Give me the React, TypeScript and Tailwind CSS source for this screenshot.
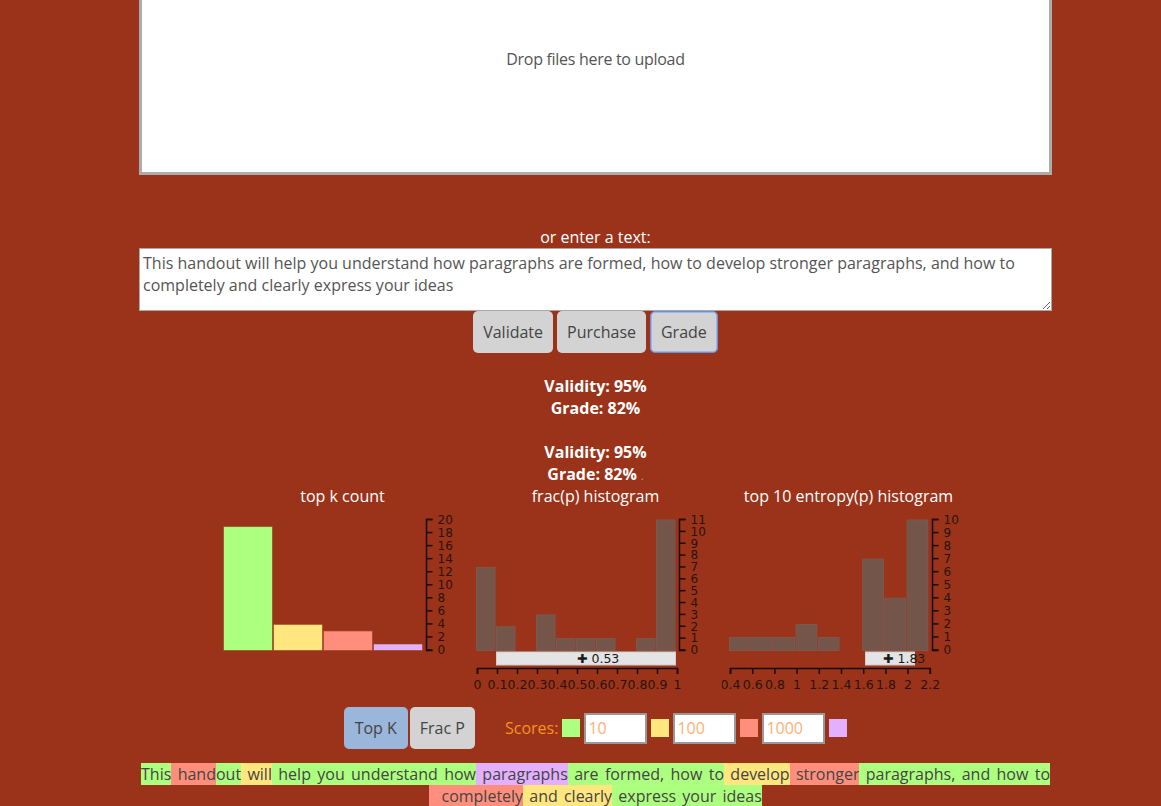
import React from 'react';

const FONT = { fontFamily: '"Open Sans", "Noto Sans", sans-serif' };
const AXIS_FONT = '"DejaVu Sans", sans-serif';

type Bin = { v: number; color?: string };

interface ChartProps {
  title: string;
  bins: Bin[];
  max: number;
  ticks: number[];
  binWidth: number;
  gap: number;
  bottomLabels?: string[];
  bottomStep?: number;
  slider?: { x: number; w: number; tx: number; label: string };
}

const PLOT_BOTTOM = 143;
const PLOT_H = 130.5;
const X0 = 7;
const AXIS_X = 210.5;

const Chart: React.FC<ChartProps> = ({ title, bins, max, ticks, binWidth, gap, bottomLabels, bottomStep, slider }) => {
  const y = (v: number) => PLOT_BOTTOM - (v / max) * PLOT_H;
  return (
    <div className="flex w-[253px] flex-col items-center">
      <div className="h-[22px] leading-[22px] text-white">{title}</div>
      <svg width={253} height={190} className="block">
        {bins.map((b, i) =>
          b.v > 0 ? (
            <rect
              key={i}
              x={X0 + i * binWidth + 0.5}
              y={y(b.v) + 0.5}
              width={binWidth - gap}
              height={PLOT_BOTTOM - y(b.v)}
              fill={b.color ?? '#73554a'}
              stroke={b.color ? 'rgba(150,60,30,0.6)' : '#7a5a4f'}
              strokeWidth={1}
            />
          ) : null
        )}
        {/* right axis */}
        <path
          d={`M${AXIS_X + 6},${y(max)}H${AXIS_X}V${PLOT_BOTTOM + 0.5}H${AXIS_X + 6}`}
          fill="none"
          stroke="#1a0d08"
          strokeWidth={1.5}
        />
        {ticks.map(t => (
          <g key={t}>
            <line x1={AXIS_X} x2={AXIS_X + 6} y1={y(t)} y2={y(t)} stroke="#1a0d08" strokeWidth={1.5} />
            <text
              x={AXIS_X + 11}
              y={y(t)}
              dy="0.36em"
              fontSize={12}
              fontFamily={AXIS_FONT}
              fill="#2a130c"
            >
              {t}
            </text>
          </g>
        ))}
        {slider && (
          <g>
            <rect x={slider.x} y={145} width={slider.w} height={13} fill="#e4e4e4" stroke="#cfcfcf" />
            <text x={slider.tx} y={156} fontSize={12.5} fontFamily={AXIS_FONT} fill="#1a1a1a">
              ✚ {slider.label}
            </text>
          </g>
        )}
        {bottomLabels && bottomStep && (
          <g>
            <path
              d={`M${X0 + 1.5},167V161.5H${X0 + 1.5 + bottomStep * (bottomLabels.length - 1)}V167`}
              fill="none"
              stroke="#1a0d08"
              strokeWidth={1.5}
            />
            {bottomLabels.map((l, i) => (
              <g key={l}>
                <line
                  x1={X0 + 1.5 + i * bottomStep}
                  x2={X0 + 1.5 + i * bottomStep}
                  y1={161}
                  y2={167}
                  stroke="#1a0d08"
                  strokeWidth={1.5}
                />
                <text
                  x={X0 + 1.5 + i * bottomStep}
                  y={182}
                  textAnchor="middle"
                  fontSize={12.5}
                  fontFamily={AXIS_FONT}
                  fill="#2a130c"
                >
                  {l}
                </text>
              </g>
            ))}
          </g>
        )}
      </svg>
    </div>
  );
};

const GREEN = '#adff7f';
const YELLOW = '#ffe67f';
const RED = '#ff8f7c';
const PURPLE = '#e3b0ff';

const tokens: { t: string; c: string }[] = [
  { t: 'This', c: GREEN },
  { t: ' hand', c: RED },
  { t: 'out', c: GREEN },
  { t: ' will', c: YELLOW },
  { t: ' help you understand how', c: GREEN },
  { t: ' paragraphs', c: PURPLE },
  { t: ' are formed, how to', c: GREEN },
  { t: ' develop', c: YELLOW },
  { t: ' stronger', c: RED },
  { t: ' paragraphs, and how to', c: GREEN },
];

const tokens2: { t: string; c: string }[] = [
  { t: '\u00a0\u00a0completely', c: RED },
  { t: ' and clearly', c: YELLOW },
  { t: ' express your ideas', c: GREEN },
];

const App: React.FC = () => {
  return (
    <div className="min-h-[806px] w-full overflow-hidden bg-[#9a331a] text-base" style={FONT}>
      <div className="ml-[139px] w-[913px]">
        {/* upload zone */}
        <div className="flex h-[175px] flex-col items-center border-[3px] border-t-0 border-[#ababab] bg-white">
          <div className="mt-[47px] text-[16px] tracking-[-0.3px] text-[#555]">Drop files here to upload</div>
        </div>

        <div className="mt-[51px] text-center leading-[22px] text-white">or enter a text:</div>
        <textarea
          className="block h-[63px] w-full border border-[#a9a9a9] bg-white px-[3px] py-[3px] text-[16px] leading-[22px] text-[#555] outline-none"
          style={FONT}
          defaultValue="This handout will help you understand how paragraphs are formed, how to develop stronger paragraphs, and how to completely and clearly express your ideas"
        />
        <div className="flex justify-center gap-1">
          <button className="h-[42px] rounded-[5px] bg-[#d3d3d3] px-[10px] text-[#444]">Validate</button>
          <button className="h-[42px] rounded-[5px] bg-[#d3d3d3] px-[10px] text-[#444]">Purchase</button>
          <button className="h-[42px] rounded-[5px] border border-[#6b8fdb] bg-[#d3d3d3] px-[10px] text-[#444] shadow-[inset_0_0_0_1px_#9fb6e6]">
            Grade
          </button>
        </div>

        <div className="mt-[22px] text-center font-bold leading-[22px] text-white">
          <div>Validity: 95%</div>
          <div>Grade: 82%</div>
          <div>&nbsp;</div>
          <div>Validity: 95%</div>
          <div className="h-[22px]">
            Grade: 82% <span className="text-[10px] leading-none font-normal text-[#c7a59a]">.</span>
          </div>
        </div>

        {/* charts */}
        <div className="flex justify-center">
          <Chart
            title="top k count"
            bins={[
              { v: 19, color: GREEN },
              { v: 4, color: YELLOW },
              { v: 3, color: RED },
              { v: 1, color: PURPLE },
            ]}
            max={20}
            ticks={[0, 2, 4, 6, 8, 10, 12, 14, 16, 18, 20]}
            binWidth={50}
            gap={1}
          />
          <Chart
            title="frac(p) histogram"
            bins={[7, 2, 0, 3, 1, 1, 1, 0, 1, 11].map(v => ({ v }))}
            max={11}
            ticks={[0, 1, 2, 3, 4, 5, 6, 7, 8, 9, 10, 11]}
            binWidth={20}
            gap={1.5}
            bottomLabels={['0', '0.1', '0.2', '0.3', '0.4', '0.5', '0.6', '0.7', '0.8', '0.9', '1']}
            bottomStep={20}
            slider={{ x: 27.5, w: 179, tx: 108, label: '0.53' }}
          />
          <Chart
            title="top 10 entropy(p) histogram"
            bins={[1, 1, 1, 2, 1, 0, 7, 4, 10].map(v => ({ v }))}
            max={10}
            ticks={[0, 1, 2, 3, 4, 5, 6, 7, 8, 9, 10]}
            binWidth={22.2}
            gap={1.5}
            bottomLabels={['0.4', '0.6', '0.8', '1', '1.2', '1.4', '1.6', '1.8', '2', '2.2']}
            bottomStep={22.2}
            slider={{ x: 143.5, w: 49, tx: 161, label: '1.83' }}
          />
        </div>

        {/* mode + scores */}
        <div className="mt-[10px] flex items-center justify-center">
          <button className="h-[42px] rounded-[5px] bg-[#9ab6da] px-[11px] text-[#444]">Top K</button>
          <button className="ml-[2px] h-[42px] rounded-[5px] bg-[#d3d3d3] px-[10px] text-[#444]">Frac P</button>
          <span className="ml-[30px] text-[#f7941d]">Scores:</span>
          <span className="ml-[4px] h-[18px] w-[18px] bg-[#adff7f]" />
          <input
            className="ml-[4px] h-[31px] w-[63px] border-2 border-[#999] bg-white px-[2px] text-[#f4a460] placeholder:text-[#f7b27a] outline-none"
            style={FONT}
            placeholder="10"
          />
          <span className="ml-[4px] h-[18px] w-[18px] bg-[#ffe67f]" />
          <input
            className="ml-[4px] h-[31px] w-[63px] border-2 border-[#999] bg-white px-[2px] text-[#f4a460] placeholder:text-[#f7b27a] outline-none"
            style={FONT}
            placeholder="100"
          />
          <span className="ml-[4px] h-[18px] w-[18px] bg-[#ff8f7c]" />
          <input
            className="ml-[4px] h-[31px] w-[63px] border-2 border-[#999] bg-white px-[2px] text-[#f4a460] placeholder:text-[#f7b27a] outline-none"
            style={FONT}
            placeholder="1000"
          />
          <span className="ml-[4px] h-[18px] w-[18px] bg-[#e3b0ff]" />
        </div>

        {/* highlighted text */}
        <div className="mt-[14px] px-[2px] text-[16px] leading-[22px] text-[#444]">
          <div className="text-justify [text-align-last:justify]">
            {tokens.map((tk, i) => (
              <span key={i} style={{ background: tk.c }}>
                {tk.t}
              </span>
            ))}
          </div>
          <div className="text-center [word-spacing:2px]">
            {tokens2.map((tk, i) => (
              <span key={i} style={{ background: tk.c }}>
                {tk.t}
              </span>
            ))}
          </div>
        </div>
      </div>
    </div>
  );
};

export default App;
